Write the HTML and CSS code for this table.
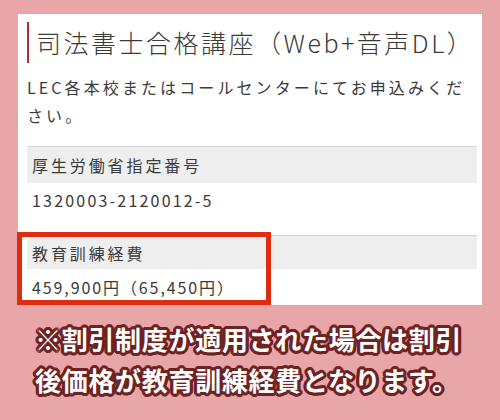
FILE: index.html
```html
<!DOCTYPE html>
<html lang="ja">
<head>
  <meta charset="UTF-8" />
  <meta name="viewport" content="width=device-width, initial-scale=1.0"/>
  <title>司法書士合格講座 - 教育訓練給付</title>
  <link rel="stylesheet" href="styles.css">
</head>
<body>
  <div class="course-card">
    <h2 class="course-title">司法書士合格講座（Web+音声DL）</h2>
    <p class="course-note">LEC各本校またはコールセンターにてお申込みください。</p>

    <dl class="info-table">
      <dt>厚生労働省指定番号</dt>
      <dd>1320003-2120012-5</dd>

      <div class="highlight-group">
        <dt>教育訓練経費</dt>
        <dd>459,900円（65,450円）</dd>
        <!-- red marker box -->
        <span class="marker"></span>
      </div>
    </dl>
  </div>

  <p class="caption">※割引制度が適用された場合は割引後価格が教育訓練経費となります。</p>
</body>
</html>
```

FILE: styles.css
```css
:root {
  --pink: #e9a6a8;
  --text: #3a3a3a;
  --row-bg: #eeeeee;
  --marker: #dd2c10;
}

body {
  margin: 0;
  background: var(--pink);
  font-family: 'Noto Sans CJK JP', 'Noto Sans', sans-serif;
  color: var(--text);
}

.course-card {
  background: #fff;
  margin: 14px 18px 0 18px;
  padding: 8px 5px 0 9px;
  height: 291px;
  box-sizing: border-box;
}

.course-title {
  margin: 0;
  height: 41px;
  line-height: 41px;
  border-left: 2px solid #b3283c;
  padding-left: 7px;
  font-size: 25px;
  font-weight: 300;
  letter-spacing: 2.5px;
  white-space: nowrap;
}

.course-note {
  margin: 10px 0 0 0;
  padding-right: 6px;
  font-size: 16px;
  line-height: 28px;
  letter-spacing: 3.1px;
}

.info-table {
  margin: 17px 0 0 0;
}

.info-table dt {
  height: 37px;
  line-height: 36px;
  background: var(--row-bg);
  border-top: 1px solid #d6d6d6;
  box-sizing: border-box;
  padding-left: 5px;
  font-size: 16px;
  letter-spacing: 2.9px;
}

.info-table dd {
  margin: 0 0 17px 0;
  padding-left: 5px;
  height: 35px;
  line-height: 35px;
  font-size: 16px;
  letter-spacing: 2.2px;
}

.highlight-group {
  position: relative;
}

.highlight-group dt {
  height: 34px;
  line-height: 34px;
}

.highlight-group dd {
  margin-bottom: 0;
  height: 36px;
  line-height: 36px;
  letter-spacing: 1.9px;
}

.marker {
  position: absolute;
  top: -3px;
  left: -10px;
  width: 254px;
  height: 73px;
  border: 5px solid var(--marker);
  box-sizing: border-box;
}

.caption {
  margin: 13px 0 0 35px;
  width: 445px;
  font-size: 26px;
  font-weight: 700;
  line-height: 41px;
  letter-spacing: 0.7px;
  color: #fff;
  text-shadow:
    3px 0 0 #6e2222, -3px 0 0 #6e2222, 0 3px 0 #6e2222, 0 -3px 0 #6e2222,
    2px 2px 0 #6e2222, -2px 2px 0 #6e2222, 2px -2px 0 #6e2222, -2px -2px 0 #6e2222,
    3px 1px 0 #6e2222, -3px 1px 0 #6e2222, 3px -1px 0 #6e2222, -3px -1px 0 #6e2222,
    1px 3px 0 #6e2222, -1px 3px 0 #6e2222, 1px -3px 0 #6e2222, -1px -3px 0 #6e2222;
}
```
